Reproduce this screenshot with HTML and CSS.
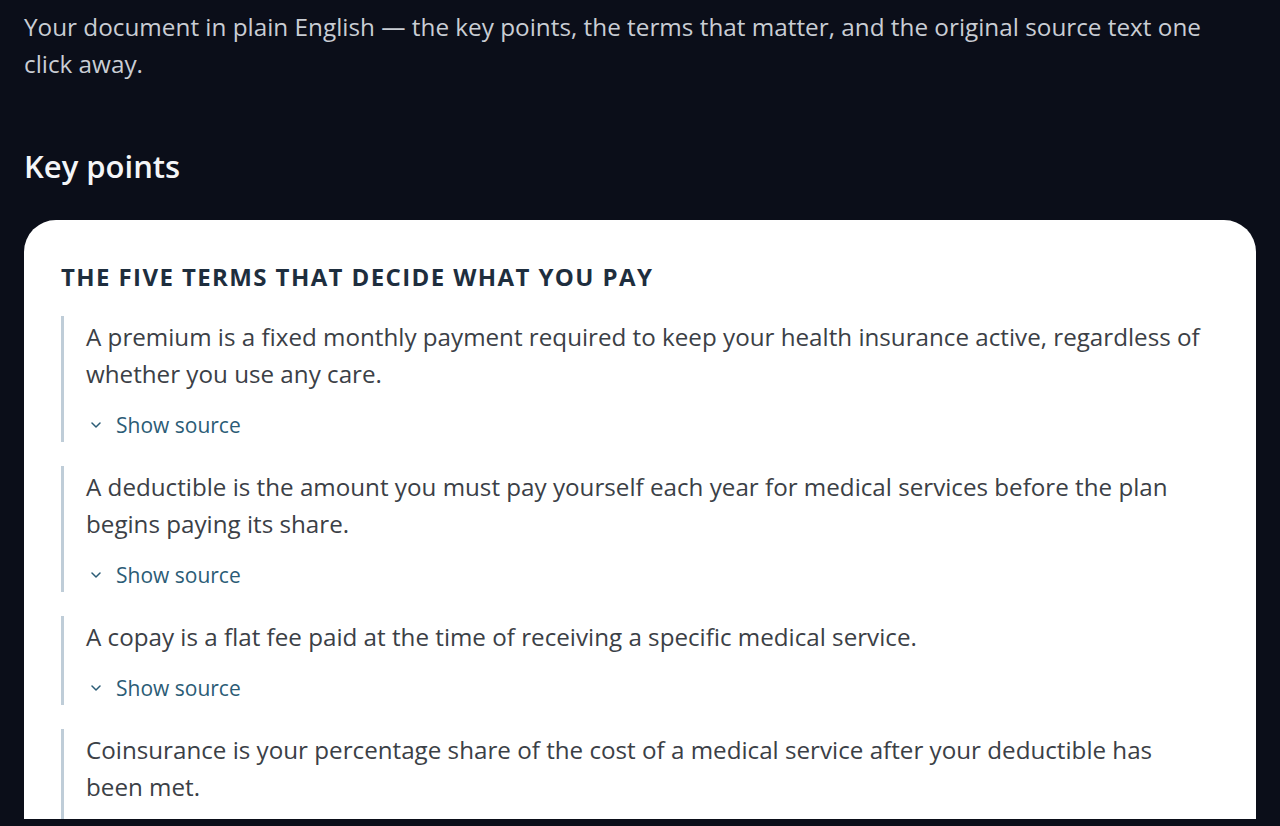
FILE: index.html
```html
<!DOCTYPE html>
<html lang="en">
<head>
<meta charset="utf-8">
<title>Key points</title>
<link rel="stylesheet" href="styles.css">
</head>
<body>
<main class="page">
  <p class="lead">Your document in plain English — the key points, the terms that matter, and the original source text one click away.</p>
  <h2 class="section-title">Key points</h2>
  <section class="card">
    <h3 class="card-title">The five terms that decide what you pay</h3>
    <ul class="points">
      <li class="point">
        <p class="point-text">A premium is a fixed monthly payment required to keep your health insurance active, regardless of whether you use any care.</p>
        <button class="source-toggle" type="button"><svg class="chev" viewBox="0 0 10 6" width="10" height="6"><path d="M1 1l4 4 4-4" fill="none" stroke="currentColor" stroke-width="1.5" stroke-linecap="round" stroke-linejoin="round"/></svg><span>Show source</span></button>
      </li>
      <li class="point">
        <p class="point-text">A deductible is the amount you must pay yourself each year for medical services before the plan begins paying its share.</p>
        <button class="source-toggle" type="button"><svg class="chev" viewBox="0 0 10 6" width="10" height="6"><path d="M1 1l4 4 4-4" fill="none" stroke="currentColor" stroke-width="1.5" stroke-linecap="round" stroke-linejoin="round"/></svg><span>Show source</span></button>
      </li>
      <li class="point">
        <p class="point-text">A copay is a flat fee paid at the time of receiving a specific medical service.</p>
        <button class="source-toggle" type="button"><svg class="chev" viewBox="0 0 10 6" width="10" height="6"><path d="M1 1l4 4 4-4" fill="none" stroke="currentColor" stroke-width="1.5" stroke-linecap="round" stroke-linejoin="round"/></svg><span>Show source</span></button>
      </li>
      <li class="point">
        <p class="point-text">Coinsurance is your percentage share of the cost of a medical service after your deductible has been met.</p>
        <button class="source-toggle" type="button"><svg class="chev" viewBox="0 0 10 6" width="10" height="6"><path d="M1 1l4 4 4-4" fill="none" stroke="currentColor" stroke-width="1.5" stroke-linecap="round" stroke-linejoin="round"/></svg><span>Show source</span></button>
      </li>
    </ul>
  </section>
</main>
</body>
</html>
```
FILE: styles.css
```css
* { box-sizing: border-box; }
html, body {
  margin: 0;
  background: #0b0e19;
}
body {
  font-family: "Open Sans", "Noto Sans", sans-serif;
}
.page {
  padding: 8px 24px 0;
  height: 819px;
  overflow: hidden;
}
.lead {
  margin: 0;
  max-width: 1195px;
  color: #c9cdd4;
  font-size: 24.3px;
  line-height: 37px;
}
.section-title {
  margin: 64px 0 0;
  color: #f4f5f7;
  font-size: 31px;
  font-weight: 600;
  line-height: 40px;
}
.card {
  margin-top: 34px;
  background: #ffffff;
  border-radius: 32px;
  padding: 42px 44px 40px 37px;
}
.card-title {
  margin: 0 0 24px;
  color: #1e2e3e;
  font-size: 24px;
  font-weight: 700;
  text-transform: uppercase;
  letter-spacing: 1.4px;
  line-height: 30px;
}
.points {
  list-style: none;
  margin: 0;
  padding: 0;
  display: flex;
  flex-direction: column;
  gap: 24px;
}
.point {
  border-left: 3px solid #bfcdd8;
  padding: 2px 0 2px 22px;
}
.point-text {
  margin: 0;
  color: #3b4046;
  font-size: 24.2px;
  line-height: 37px;
}
.source-toggle {
  margin-top: 18px;
  display: flex;
  align-items: center;
  gap: 15px;
  height: 30px;
  padding: 0 0 0 5px;
  border: 0;
  background: none;
  color: #2b5c76;
  font-family: inherit;
  font-size: 21px;
  font-weight: 500;
  cursor: pointer;
}
.chev { display: block; }
```
